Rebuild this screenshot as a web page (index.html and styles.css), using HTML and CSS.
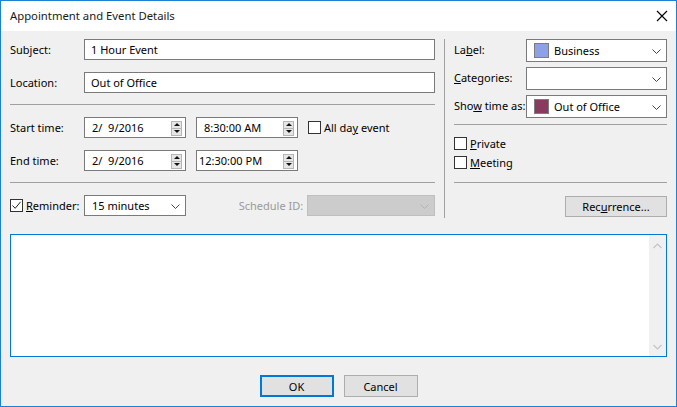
FILE: index.html
```html
<!DOCTYPE html>
<html lang="en">
<head>
<meta charset="utf-8">
<title>Appointment and Event Details</title>
<link rel="stylesheet" href="styles.css">
</head>
<body>
<div class="window">
  <div class="titlebar">
    <span class="title">Appointment and Event Details</span>
    <svg class="close" width="12" height="12" viewBox="0 0 12 12">
      <path d="M1 1 L11 11 M11 1 L1 11" stroke="#000" stroke-width="1.1" fill="none"/>
    </svg>
  </div>

  <div class="content">
    <div class="top">
      <!-- subject, location, dates and reminder -->
      <div class="left">
        <div class="row">
          <span class="label">Subject:</span>
          <div class="field wide">1 Hour Event</div>
        </div>
        <div class="row gap12">
          <span class="label">Location:</span>
          <div class="field wide">Out of Office</div>
        </div>
        <div class="hsep"></div>
        <div class="row">
          <span class="label">Start time:</span>
          <div class="field picker"><span class="val date">2/  9/2016</span><span class="spin"><i class="up"></i><i class="down"></i></span></div>
          <div class="field picker ml"><span class="val t8">8:30:00 AM</span><span class="spin"><i class="up"></i><i class="down"></i></span></div>
          <span class="check ml"><span class="box"></span><span>All da<u>y</u> event</span></span>
        </div>
        <div class="row gap12">
          <span class="label">End time:</span>
          <div class="field picker"><span class="val date">2/  9/2016</span><span class="spin"><i class="up"></i><i class="down"></i></span></div>
          <div class="field picker ml"><span class="val t12">12:30:00 PM</span><span class="spin"><i class="up"></i><i class="down"></i></span></div>
        </div>
        <div class="hsep"></div>
        <div class="row">
          <span class="label check"><span class="box">
            <svg width="11" height="11" viewBox="0 0 11 11"><path d="M1.5 5.5 L4.2 8.3 L9.6 1.8" stroke="#222" stroke-width="1" fill="none"/></svg>
          </span><span><u>R</u>eminder:</span></span>
          <div class="field combo small"><span class="val">15 minutes</span><svg class="chev" width="9" height="5" viewBox="0 0 9 5"><path d="M0.5 0.5 L4.5 4.5 L8.5 0.5" stroke="#444" fill="none"/></svg></div>
          <span class="muted">Schedule ID:</span>
          <div class="field combo disabled"><svg class="chev" width="9" height="5" viewBox="0 0 9 5"><path d="M0.5 0.5 L4.5 4.5 L8.5 0.5" stroke="#b4b4b4" fill="none"/></svg></div>
        </div>
      </div>

      <div class="vsep"></div>

      <!-- label, categories, availability and flags -->
      <div class="right">
        <div class="rrow">
          <span class="rlabel">La<u>b</u>el:</span>
          <div class="field combo tall"><span class="swatch business"></span><span class="val">Business</span><svg class="chev" width="9" height="5" viewBox="0 0 9 5"><path d="M0.5 0.5 L4.5 4.5 L8.5 0.5" stroke="#444" fill="none"/></svg></div>
        </div>
        <div class="rrow">
          <span class="rlabel"><u>C</u>ategories:</span>
          <div class="field combo tall"><svg class="chev" width="9" height="5" viewBox="0 0 9 5"><path d="M0.5 0.5 L4.5 4.5 L8.5 0.5" stroke="#444" fill="none"/></svg></div>
        </div>
        <div class="rrow">
          <span class="rlabel">Sho<u>w</u> time as:</span>
          <div class="field combo tall"><span class="swatch away"></span><span class="val">Out of Office</span><svg class="chev" width="9" height="5" viewBox="0 0 9 5"><path d="M0.5 0.5 L4.5 4.5 L8.5 0.5" stroke="#444" fill="none"/></svg></div>
        </div>
        <div class="hsep r1"></div>
        <div class="flags">
          <span class="check"><span class="box"></span><span><u>P</u>rivate</span></span>
          <span class="check"><span class="box"></span><span><u>M</u>eeting</span></span>
        </div>
        <div class="hsep r2"></div>
        <div class="recur"><span class="button">Rec<u>u</u>rrence...</span></div>
      </div>
    </div>

    <div class="notes">
      <div class="scroll">
        <svg width="9" height="6" viewBox="0 0 9 6"><path d="M0.5 5 L4.5 1 L8.5 5" stroke="#c4c4c4" stroke-width="1.2" fill="none"/></svg>
        <svg width="9" height="6" viewBox="0 0 9 6"><path d="M0.5 1 L4.5 5 L8.5 1" stroke="#c4c4c4" stroke-width="1.2" fill="none"/></svg>
      </div>
    </div>

    <div class="actions">
      <span class="button default">OK</span>
      <span class="button">Cancel</span>
    </div>
  </div>
</div>
</body>
</html>
```

FILE: styles.css
```css
* {
  box-sizing: border-box;
}

body {
  margin: 0;
  font-family: "Noto Sans", "DejaVu Sans", sans-serif;
  font-size: 11px;
  color: #000;
  background: #fff;
}

u {
  text-decoration: underline;
  text-underline-offset: 1px;
}

.window {
  width: 677px;
  height: 407px;
  border: 1px solid #1b80d6;
  background: #f0f0f0;
  display: flex;
  flex-direction: column;
}

.titlebar {
  height: 30px;
  flex: none;
  background: #fff;
  display: flex;
  align-items: center;
  justify-content: space-between;
  padding: 0 8px 1px 9px;
}

.title {
  font-size: 11.3px;
  color: #1a1a1a;
}

.content {
  padding: 8px 9px 0 9px;
  display: flex;
  flex-direction: column;
}

.top {
  display: flex;
}

/* left column */
.left {
  width: 425px;
  display: flex;
  flex-direction: column;
}

.row {
  display: flex;
  align-items: center;
  height: 21px;
}

.gap12 {
  margin-top: 12px;
}

.label {
  width: 74px;
  flex: none;
}

.hsep {
  height: 1px;
  background: #a0a0a0;
  margin: 11px 0 12px;
}

.field {
  background: #fff;
  border: 1px solid #7a7a7a;
  height: 21px;
  display: flex;
  align-items: center;
  position: relative;
  white-space: pre;
}

.wide {
  width: 351px;
  padding-left: 6px;
}

.picker {
  width: 102px;
  justify-content: space-between;
  padding-right: 3px;
}

.ml {
  margin-left: 10px;
}

.val.date {
  padding-left: 7px;
}

.val.t8 {
  padding-left: 7px;
}

.val.t12 {
  padding-left: 2px;
}

/* up/down spinner inside the date and time pickers */
.spin {
  width: 11px;
  height: 15px;
  display: flex;
  flex-direction: column;
  border: 1px solid #b5b5b5;
  background: #e6e6e6;
  margin-top: 1px;
}

.spin i {
  flex: 1;
  display: flex;
  align-items: center;
  justify-content: center;
}

.spin i + i {
  border-top: 1px solid #b5b5b5;
}

.spin i::after {
  content: "";
  width: 0;
  height: 0;
  border-left: 3px solid transparent;
  border-right: 3px solid transparent;
}

.spin .up::after {
  border-bottom: 3px solid #111;
}

.spin .down::after {
  border-top: 3px solid #111;
}

.check {
  display: flex;
  align-items: center;
  gap: 3px;
}

.box {
  width: 13px;
  height: 13px;
  border: 1px solid #333;
  background: #fff;
  display: flex;
  align-items: center;
  justify-content: center;
  flex: none;
}

.combo {
  padding-left: 7px;
}

.combo .chev {
  position: absolute;
  right: 5px;
  top: 50%;
  margin-top: -2px;
}

.small {
  width: 102px;
}

.muted {
  color: #9a9a9a;
  margin-left: 53px;
  width: 69px;
}

.disabled {
  width: 128px;
  background: #cccccc;
  border-color: #bfbfbf;
}

/* vertical divider between the columns */
.vsep {
  width: 1px;
  height: 179px;
  background: #a0a0a0;
  margin: 0 9px;
  flex: none;
}

/* right column */
.right {
  width: 213px;
  display: flex;
  flex-direction: column;
}

.rrow {
  display: flex;
  align-items: center;
  margin-bottom: 5px;
}

.rrow:nth-child(3) {
  margin-bottom: 0;
}

.rlabel {
  width: 72px;
  flex: none;
  margin-top: -3px;
}

.tall {
  width: 141px;
  height: 23px;
}

.swatch {
  width: 15px;
  height: 15px;
  border: 1px solid #7d7d7d;
  margin-right: 5px;
  flex: none;
}

.swatch.business {
  background: #8da2e6;
}

.swatch.away {
  background: #8a3a5e;
}

.hsep.r1 {
  margin: 6px 0 12px;
}

.hsep.r2 {
  margin: 13px 0 13px;
}

.flags {
  display: flex;
  flex-direction: column;
  gap: 6px;
}

.flags .check {
  height: 13px;
}

.recur {
  display: flex;
  justify-content: flex-end;
}

.button {
  display: flex;
  align-items: center;
  justify-content: center;
  background: #e1e1e1;
  border: 1px solid #adadad;
  height: 21px;
  width: 102px;
}

/* notes box */
.notes {
  margin-top: 16px;
  width: 657px;
  height: 123px;
  border: 1px solid #0078d7;
  background: #fff;
  display: flex;
  justify-content: flex-end;
}

.scroll {
  width: 17px;
  background: #f0f0f0;
  display: flex;
  flex-direction: column;
  justify-content: space-between;
  align-items: center;
  padding: 8px 0 6px;
}

/* dialog buttons */
.actions {
  margin-top: 18px;
  width: 657px;
  display: flex;
  justify-content: center;
  gap: 10px;
}

.actions .button {
  width: 74px;
  height: 22px;
}

.actions .default {
  border: 2px solid #0078d7;
}
```
